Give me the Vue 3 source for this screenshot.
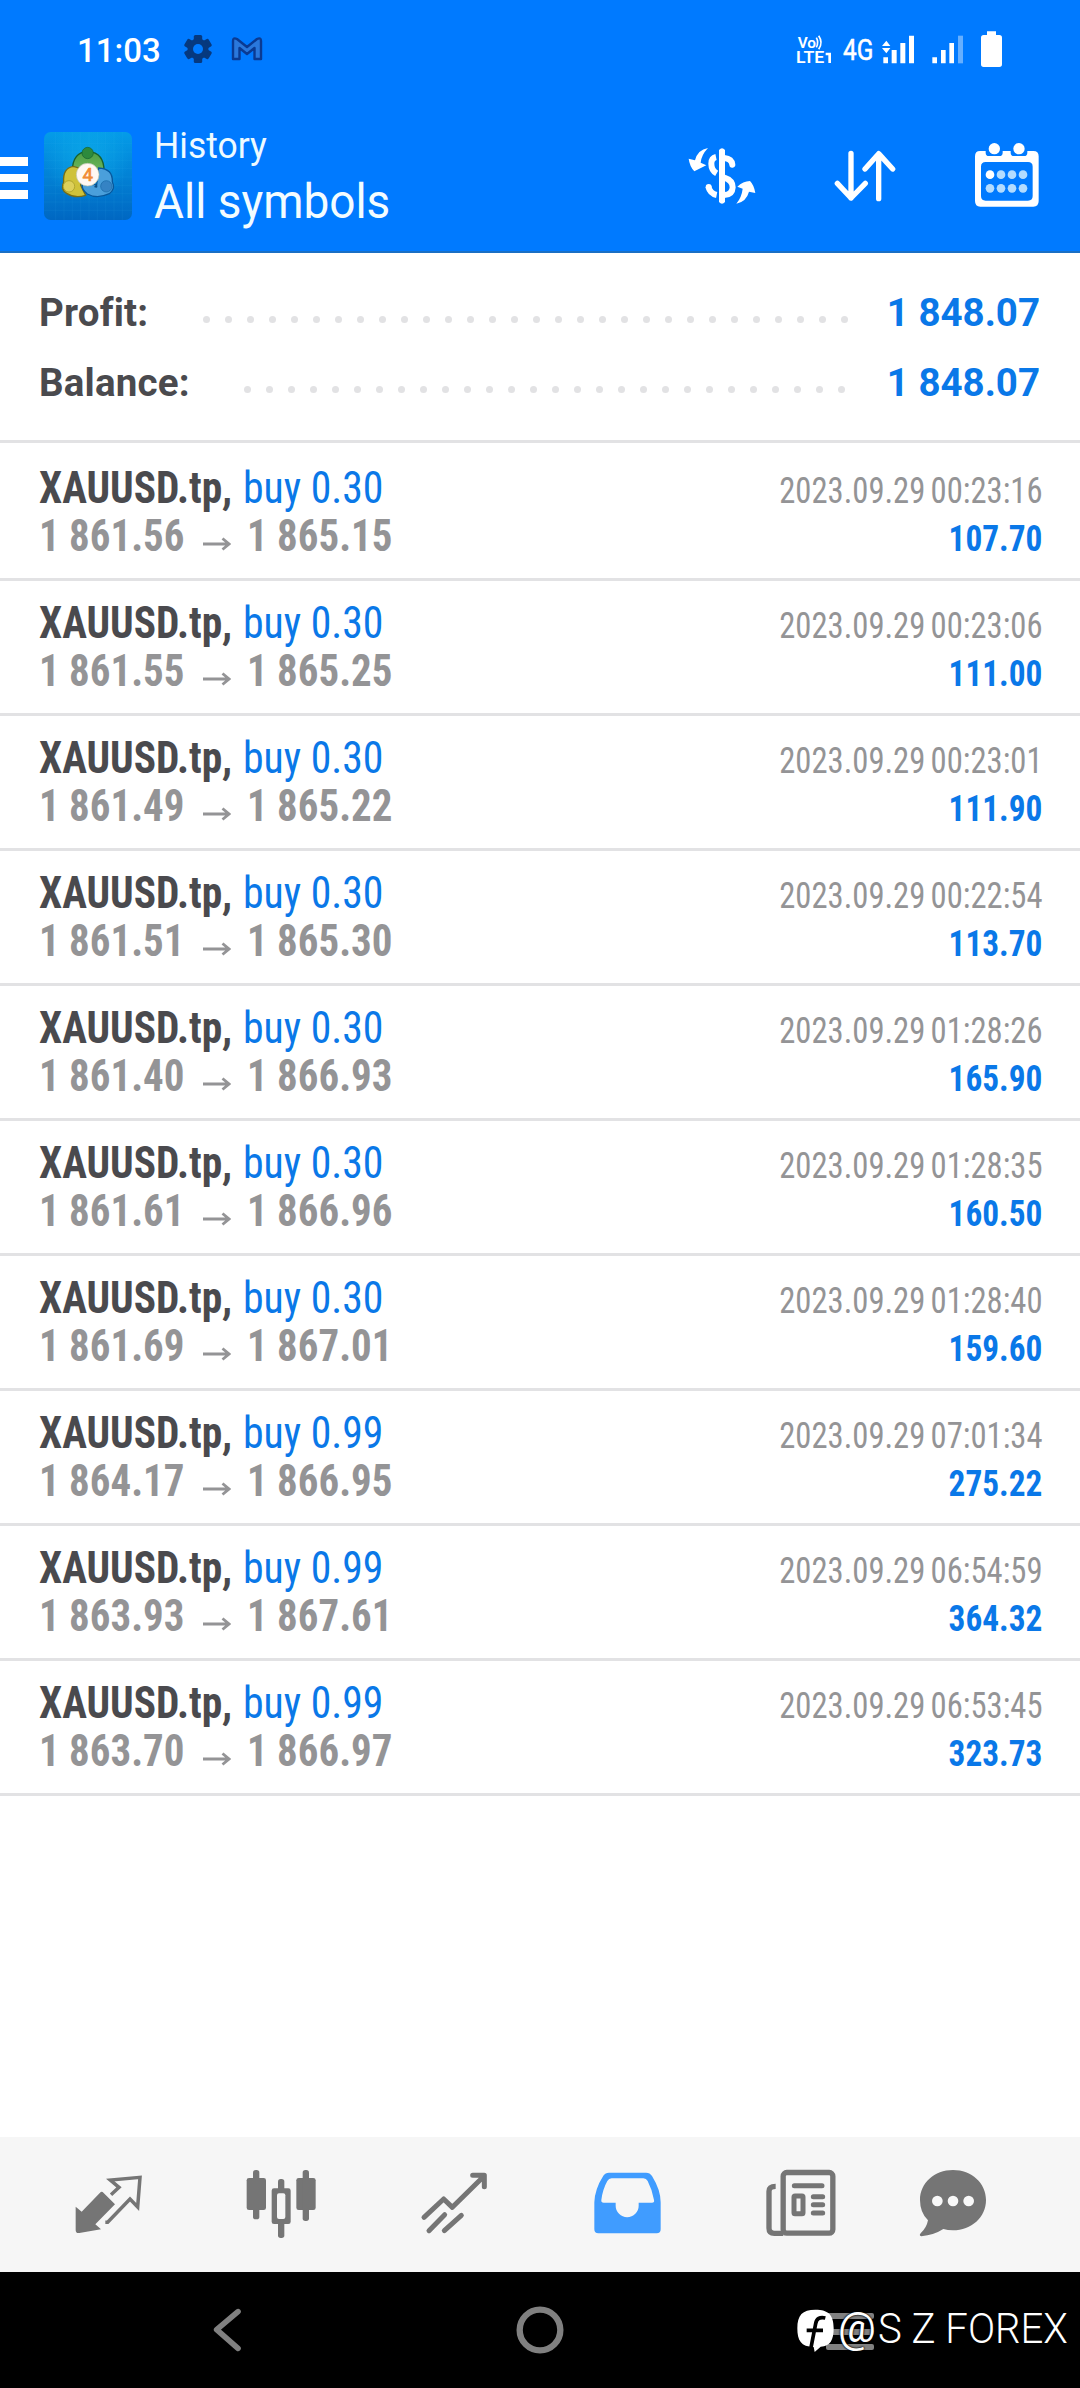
<script setup>
const summary = [
  { label: 'Profit:', value: '1 848.07', dots: 30, cls: 'profit' },
  { label: 'Balance:', value: '1 848.07', dots: 28, cls: 'balance' },
]

const deals = [
  ['0.30', '1 861.56', '1 865.15', '00:23:16', '107.70'],
  ['0.30', '1 861.55', '1 865.25', '00:23:06', '111.00'],
  ['0.30', '1 861.49', '1 865.22', '00:23:01', '111.90'],
  ['0.30', '1 861.51', '1 865.30', '00:22:54', '113.70'],
  ['0.30', '1 861.40', '1 866.93', '01:28:26', '165.90'],
  ['0.30', '1 861.61', '1 866.96', '01:28:35', '160.50'],
  ['0.30', '1 861.69', '1 867.01', '01:28:40', '159.60'],
  ['0.99', '1 864.17', '1 866.95', '07:01:34', '275.22'],
  ['0.99', '1 863.93', '1 867.61', '06:54:59', '364.32'],
  ['0.99', '1 863.70', '1 866.97', '06:53:45', '323.73'],
].map(([volume, open, close, time, profit]) => ({ volume, open, close, time, profit }))
</script>

<template>
  <div class="screen">
    <header class="header">
      <div class="status">
        <span class="clock">11:03</span>
        <svg class="gear" width="28" height="30" viewBox="0 0 28 30">
          <g transform="translate(14 15)" fill="#06397f">
            <rect v-for="a in [0, 60, 120]" :key="a" x="-4.2" y="-14" width="8.4" height="28" rx="1.5" :transform="`rotate(${a})`" />
            <circle r="10.5" />
            <circle r="5" fill="#007aff" />
          </g>
        </svg>
        <svg class="mail" width="32" height="26" viewBox="0 0 32 26">
          <path d="M2 23V5Q2 1 6 3L16 11L26 3Q30 1 30 5V23H23.500V12L16 18L8.500 12V23Z" fill="#2a78dc" stroke="#0a3a92" stroke-width="2.400" stroke-linejoin="round" />
        </svg>
        <svg class="radio" width="210" height="40" viewBox="1 0 630 120">
          <g transform="translate(-410 -90)" fill="#fff">
            <text x="416" y="145" font-size="45" font-weight="600" textLength="55" lengthAdjust="spacingAndGlyphs">Vo</text>
            <path d="M472 113Q480 127 472 142M479 107Q493 127 479 148" fill="none" stroke="#fff" stroke-width="5" />
            <text x="411" y="189" font-size="49" font-weight="600" textLength="85" lengthAdjust="spacingAndGlyphs">LTE</text>
            <path d="M500 158H516V189H508V166H500Z" />
            <text x="552" y="180" font-size="86" textLength="91" lengthAdjust="spacingAndGlyphs" stroke="#fff" stroke-width="1.5">4G</text>
            <path d="M669 138L682 122L694 138ZM669 144H694L682 160Z" />
            <path d="M673 172h14v18h-14zM698 150h15v40h-15zM724 129h15v61h-15zM750 107h15v83h-15z" />
            <path d="M820 172h14v18h-14zM846 150h14v40h-14zM871 129h14v61h-14z" />
            <path d="M897 107h15v83h-15z" opacity=".4" />
            <path d="M984 94h27v11h10q8 0 8 8v80q0 8-8 8h-47q-8 0-8-8v-80q0-8 8-8h10z" />
          </g>
        </svg>
      </div>

      <div class="appbar">
        <div class="burger"><i></i><i></i><i></i></div>
        <svg class="logo" width="88" height="88" viewBox="0 0 264 264">
          <defs>
            <linearGradient id="tile" x1="0" y1="0" x2="0" y2="1"><stop offset="0" stop-color="#049ce8" /><stop offset="1" stop-color="#0067c2" /></linearGradient>
            <radialGradient id="glow"><stop offset="0" stop-color="#10b4ec" stop-opacity=".6" /><stop offset="1" stop-color="#10b4ec" stop-opacity="0" /></radialGradient>
            <linearGradient id="green" x1="0" y1="0" x2="0" y2="1"><stop offset="0" stop-color="#4c9e42" /><stop offset="1" stop-color="#7cc26a" /></linearGradient>
          </defs>
          <rect width="264" height="264" rx="20" fill="url(#tile)" />
          <circle cx="130" cy="85" r="125" fill="url(#glow)" />
          <path d="M35 0V264M60 0V264M85 0V264M110 0V264M135 0V264M160 0V264M185 0V264M210 0V264M235 0V264M0 35H264M0 60H264M0 85H264M0 110H264M0 135H264M0 160H264M0 185H264M0 210H264M0 235H264" stroke="#55d2ff" stroke-opacity=".1" stroke-width="2" />
          <path d="M85 118Q85 60 132 58Q181 62 180 118L158 148L105 128Z" fill="url(#green)" stroke="#17602e" stroke-width="4" />
          <path d="M88 103Q56 108 59 150Q48 172 68 184Q92 200 125 190L110 160L112 110Z" fill="#cfc23a" stroke="#756d18" stroke-width="4" />
          <path d="M164 108Q207 110 205 150Q216 170 196 185Q160 202 130 186Q112 172 115 158H158Z" fill="#4a9fdb" stroke="#07589d" stroke-width="4" />
          <path d="M150 165Q165 172 158 155Z" fill="#0b4f86" />
          <circle cx="131" cy="63" r="17" fill="#2d8a3d" stroke="#17602e" stroke-width="2" />
          <circle cx="75" cy="163" r="17" fill="#ddd05a" stroke="#a09725" stroke-width="2" />
          <circle cx="187" cy="163" r="17" fill="#3583c4" stroke="#1768a6" stroke-width="2" />
          <circle cx="131" cy="128" r="34" fill="#fff8f2" stroke="#b9c3ae" stroke-width="2" />
          <text x="131" y="148" font-size="56" fill="#f18b35" stroke="#f18b35" stroke-width="2" text-anchor="middle">4</text>
        </svg>
        <div class="titles">
          <div class="subtitle">History</div>
          <div class="title">All symbols</div>
        </div>
        <svg class="act-dollar" width="72" height="68" viewBox="78 426 216 204">
          <g fill="none" stroke="#fff" stroke-width="18">
            <path d="M168 471Q154 474 154 491Q154 511 170 520" />
            <path d="M193 474Q215 476 217 494" stroke-linecap="round" />
            <path d="M193 533Q218 541 218 562Q217 584 193 585" />
            <path d="M145 560Q150 581 170 585" />
          </g>
          <circle cx="146" cy="561" r="9" fill="#fff" />
          <path d="M177 450Q186 439 195 450V606Q186 616 177 606Z" fill="#fff" />
          <path d="M144 444Q113 449 105 481L86 476Q89 499 103 514L139 496L122 488Q124 465 144 444Z" fill="#fff" />
          <path d="M229 611Q259 605 267 575L286 579Q282 555 270 543Q249 544 232 560L248 566Q245 592 229 611Z" fill="#fff" />
        </svg>
        <svg class="act-sort" width="64" height="68" viewBox="519 426 192 204">
          <path d="M573 460V594M532 550L573 594L616 550M656 596V462M615 507L656 461L698 507" fill="none" stroke="#fff" stroke-width="16" stroke-linecap="round" stroke-linejoin="round" />
        </svg>
        <svg class="act-cal" width="68" height="68" viewBox="939 426 204 204">
          <path fill-rule="evenodd" fill="#fff" d="M960 453H1120Q1136 453 1136 469V603Q1136 620 1120 620H961Q945 620 945 603V469Q945 453 960 453ZM977 486Q963 486 963 500V588Q963 602 977 602H1104Q1118 602 1118 588V500Q1118 486 1104 486Z" />
          <path d="M977 452V458Q977 468 987 468H1018Q1028 468 1028 458V452ZM1052 452V458Q1052 468 1062 468H1092Q1102 468 1102 458V452Z" fill="#007aff" />
          <circle cx="1003" cy="446" r="17" fill="#fff" /><circle cx="1077" cy="446" r="17" fill="#fff" />
          <g fill="#b3dcff">
            <circle cx="990" cy="524" r="13" fill="#fff" /><circle v-for="x in [1023, 1056, 1089]" :key="x" :cx="x" cy="524" r="13" />
            <circle v-for="x in [990, 1023, 1056, 1089]" :key="'b' + x" :cx="x" cy="565" r="13" />
          </g>
        </svg>
      </div>
    </header>

    <section class="summary">
      <div v-for="s in summary" :key="s.label" class="sum-row" :class="s.cls">
        <span class="sum-label">{{ s.label }}</span>
        <span class="dots"><i v-for="n in s.dots" :key="n"></i></span>
        <span class="sum-value">{{ s.value }}</span>
      </div>
    </section>

    <main class="list">
      <div v-for="d in deals" :key="d.time" class="deal">
        <div class="line">
          <span class="symbol">XAUUSD.tp,</span>
          <span class="side">buy {{ d.volume }}</span>
          <span class="date">2023.09.29 {{ d.time }}</span>
        </div>
        <div class="line">
          <span class="price">{{ d.open }}</span>
          <svg class="arrow" width="28" height="14" viewBox="0 0 28 14"><path d="M0 7H26M19.500 1.500L26 7L19.500 12.500" fill="none" stroke="#949496" stroke-width="2.800" /></svg>
          <span class="price">{{ d.close }}</span>
          <span class="gain">{{ d.profit }}</span>
        </div>
      </div>
    </main>

    <nav class="tabs">
      <svg class="t1" width="70" height="72" viewBox="222 144 210 216">
        <path d="M308 216L345 253L286 313L303 328L238 339Q227 341 227 330V260L245 275L300 218Q304 213 308 216Z" fill="#757575" />
        <path d="M333 224L357 202L331 180L420 172L413 261L390 237L323 307H316" fill="none" stroke="#757575" stroke-width="10.500" />
      </svg>
      <svg class="t2" width="72" height="72" viewBox="735 144 216 216">
        <g fill="#757575">
          <rect x="740" y="174" width="58" height="96" rx="7" /><rect x="759" y="150" width="19" height="148" rx="8" />
          <rect x="889" y="174" width="58" height="96" rx="7" /><rect x="908" y="150" width="19" height="153" rx="8" />
          <rect x="834" y="177" width="19" height="177" rx="8" /><rect x="815" y="205" width="57" height="107" rx="7" />
        </g>
        <rect x="831" y="220" width="25" height="77" rx="6" fill="#f6f6f6" />
      </svg>
      <svg class="t3" width="69" height="72" viewBox="180 144 207 216">
        <path d="M192 292L251 237L277 262L370 170M338 166H373V200M207 332L254 284M253 332L304 286" fill="none" stroke="#757575" stroke-width="15" stroke-linecap="round" stroke-linejoin="round" />
      </svg>
      <svg class="t4" width="69" height="72" viewBox="699 144 207 216">
        <path fill-rule="evenodd" fill="#409cff" d="M747 158H858Q870 158 876 168Q902 210 902 247V328Q902 340 890 340H715Q703 340 703 328V247Q704 208 730 167Q736 158 747 158ZM755 175Q746 175 742 183Q728 208 724 240Q723 248 731 248H767V257A34.500 34.500 0 0 0 836 257V248H876Q884 248 882 240Q877 210 863 183Q859 175 850 175Z" />
      </svg>
      <svg class="t5" width="72" height="72" viewBox="135 144 216 216">
        <rect x="189.500" y="157.500" width="149" height="182" rx="11" fill="none" stroke="#757575" stroke-width="16" />
        <path d="M167 199Q147 199 147 214V325Q147 340 163 340H190" fill="none" stroke="#757575" stroke-width="16" />
        <rect x="222" y="228" width="27" height="53" rx="3" fill="none" stroke="#757575" stroke-width="15" />
        <path d="M223 197H306M280 230H308M280 254H308M280 279H308" fill="none" stroke="#757575" stroke-width="15" stroke-linecap="round" />
      </svg>
      <svg class="t6" width="68" height="72" viewBox="597 144 204 216">
        <path d="M699 150C755 150 798 189 798 240C798 292 754 331 699 331Q683 331 670 327Q642 345 604 349Q596 347 602 340Q620 323 624 301Q600 278 600 240C600 189 643 150 699 150Z" fill="#757575" />
        <circle v-for="x in [652, 699, 746]" :key="x" :cx="x" cy="243" r="16" fill="#f8f8f8" />
      </svg>
    </nav>

    <footer class="sysbar">
      <svg class="back" width="32" height="48" viewBox="636 559 96 144"><path d="M714 576L650 630L714 686" fill="none" stroke="#808080" stroke-width="17" stroke-linecap="round" stroke-linejoin="round" /></svg>
      <svg class="home" width="48" height="48" viewBox="469 559 144 144"><circle cx="541" cy="631" r="61" fill="none" stroke="#808080" stroke-width="19" /></svg>
      <div class="recents"><i></i><i></i><i></i></div>
      <div class="mark">
        <svg width="37" height="44" viewBox="231 568 111 132">
          <path d="M286 570C326 570 341 586 341 626C341 661 331 680 302 681Q294 688 284 697L281 682C243 682 232 662 232 626C232 586 247 570 286 570Z" fill="#fff" />
          <path d="M316 595Q291 589 287 612L273 684M260 632H309" fill="none" stroke="#000" stroke-width="11" />
        </svg>
        <span class="at">@</span><span class="name">S Z FOREX</span>
      </div>
    </footer>
  </div>
</template>

<style>
body { margin: 0; background: #fff; }
</style>

<style scoped>
.screen { width: 1080px; height: 2388px; display: flex; flex-direction: column; background: #fff; font-family: Roboto, "Liberation Sans", sans-serif; overflow: hidden; }
.screen svg { display: block; flex: none; }
.header { height: 251px; background: #007aff; border-bottom: 2px solid #1a6fc4; color: #fff; flex: none; }
.status { height: 98px; display: flex; align-items: flex-start; }
.clock { width: 107px; margin-left: 77px; padding-top: 29px; font-size: 33px; line-height: 44px; font-weight: 500; }
.gear { margin-top: 34px; }
.mail { margin: 36px 0 0 19px; }
.radio { margin: 30px 0 0 533px; }
.appbar { height: 153px; display: flex; align-items: flex-start; }
.burger { width: 28px; margin-top: 59px; display: flex; flex-direction: column; gap: 8px; }
.burger i { height: 8.5px; background: #fff; }
.logo { margin: 34px 0 0 16px; }
.titles { width: 300px; margin: 24px 0 0 22px; }
.subtitle { font-size: 36px; line-height: 48px; color: #eefaff; transform: scaleX(.985); transform-origin: 0 0; }
.title { font-size: 48px; line-height: 64px; color: #f3fcff; transform: scaleX(.957); transform-origin: 0 0; }
.act-dollar { margin: 44px 0 0 232px; }
.act-sort { margin: 44px 0 0 75px; }
.act-cal { margin: 44px 0 0 76px; }

.summary { height: 162px; padding: 25px 40px 0 39px; border-bottom: 3px solid #e2e2e4; flex: none; }
.sum-row { display: flex; height: 70px; line-height: 70px; font-size: 38.5px; font-weight: 700; font-variant-ligatures: none; }
.sum-label { color: #4a4a4e; letter-spacing: .2px; }
.profit .sum-label { width: 164px; }
.balance .sum-label { width: 205px; }
.dots { display: flex; gap: 15px; padding-top: 38px; }
.dots i { width: 7px; height: 7px; border-radius: 50%; background: #e2e2e4; }
.sum-value { margin-left: auto; color: #0a78e8; }

.list { flex: 1; padding-top: 3px; }
.deal { height: 114px; padding: 18px 38px 0 39px; border-bottom: 3px solid #e2e2e4; }
.line { display: flex; align-items: baseline; height: 48px; line-height: 48px; font-size: 44px; font-stretch: 75%; font-family: "Roboto Condensed", Roboto, sans-serif; white-space: nowrap; }
.line span { transform-origin: 0 0; flex: none; }
.line .date, .line .gain { transform-origin: 100% 0; margin-left: auto; }
.symbol { font-weight: 700; color: #4a4a4e; width: 203.500px; transform: scaleX(.94); }
.side { color: #0a78e8; transform: scaleX(.948); }
.date { font-size: 37px; color: #949496; word-spacing: -2.500px; transform: scaleX(.882); }
.price { width: 164px; font-weight: 700; color: #949496; transform: scaleX(.93); }
.arrow { margin: 0 16px 1px 0; }
.gain { font-size: 36px; font-weight: 700; color: #0a78e8; transform: scaleX(.925); }

.tabs { height: 135px; background: #f6f6f6; display: flex; align-items: flex-start; padding-top: 31px; box-sizing: border-box; flex: none; }
.t1 { margin-left: 74px; }
.t2 { margin-left: 101px; }
.t3 { margin-left: 103px; }
.t4 { margin-left: 104px; }
.t5 { margin-left: 103px; }
.t6 { margin-left: 82px; }

.sysbar { position: relative; height: 116px; background: #000; display: flex; padding-top: 34px; box-sizing: border-box; flex: none; }
.back { margin-left: 212px; }
.home { margin-left: 272px; }
.recents { width: 48px; margin: 7px 0 0 262px; display: flex; flex-direction: column; gap: 9.500px; }
.recents i { height: 6px; border-radius: 2px; background: #808080; }
.mark { position: absolute; left: 797px; top: 37px; display: flex; color: #fff; white-space: nowrap; line-height: 48px; }
.at { width: 38px; margin: -7px 0 0 4px; font-size: 42px; line-height: 52px; text-shadow: 0 0 2px #000, 0 0 2px #000; }
.name { margin: -4px 0 0 2px; font-size: 42px; font-weight: 300; transform: scaleX(.955); transform-origin: 0 0; }
</style>
